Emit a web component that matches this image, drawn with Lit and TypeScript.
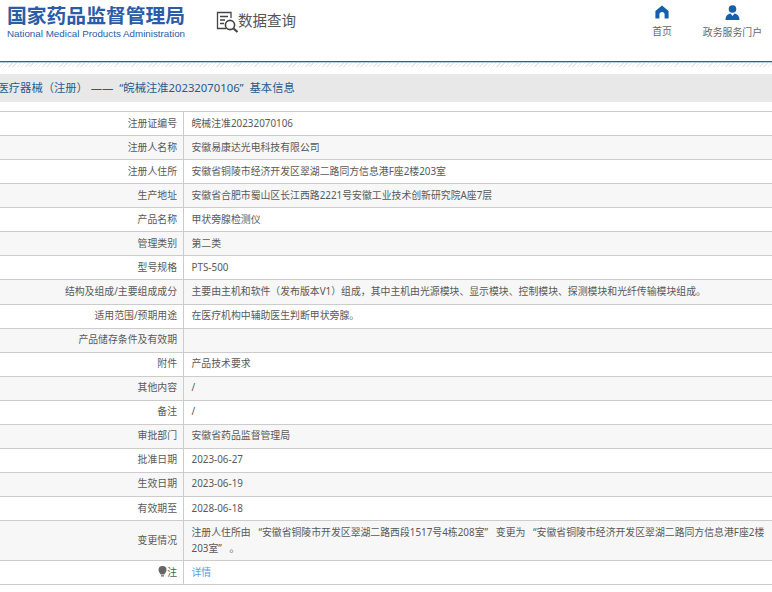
import { LitElement, html, css } from "lit";
import { customElement } from "lit/decorators.js";

const rows: [string, string][] = [
  ["注册证编号", "皖械注准20232070106"],
  ["注册人名称", "安徽易康达光电科技有限公司"],
  ["注册人住所", "安徽省铜陵市经济开发区翠湖二路同方信息港F座2楼203室"],
  ["生产地址", "安徽省合肥市蜀山区长江西路2221号安徽工业技术创新研究院A座7层"],
  ["产品名称", "甲状旁腺检测仪"],
  ["管理类别", "第二类"],
  ["型号规格", "PTS-500"],
  ["结构及组成/主要组成成分", "主要由主机和软件（发布版本V1）组成，其中主机由光源模块、显示模块、控制模块、探测模块和光纤传输模块组成。"],
  ["适用范围/预期用途", "在医疗机构中辅助医生判断甲状旁腺。"],
  ["产品储存条件及有效期", ""],
  ["附件", "产品技术要求"],
  ["其他内容", "/"],
  ["备注", "/"],
  ["审批部门", "安徽省药品监督管理局"],
  ["批准日期", "2023-06-27"],
  ["生效日期", "2023-06-19"],
  ["有效期至", "2028-06-18"],
  ["变更情况", "注册人住所由 \u00a0“安徽省铜陵市开发区翠湖二路西段1517号4栋208室” \u00a0变更为 \u00a0“安徽省铜陵市经济开发区翠湖二路同方信息港F座2楼203室” \u00a0。"],
];

@customElement("app-root")
export class AppRoot extends LitElement {
  static styles = css`
    :host {
      display: block;
      width: 772px;
      height: 592px;
      overflow: hidden;
      background: #fff;
      font-family: "Noto Sans", "Noto Sans CJK SC", sans-serif;
      color: #595959;
      font-size: 9.87px;
    }
    .header {
      height: 61px;
      display: flex;
      box-sizing: border-box;
      padding: 3px 0 0 7px;
    }
    .logo { width: 178px; }
    .logo-cn {
      font-family: "Noto Sans CJK SC", sans-serif;
      font-size: 19.8px;
      font-weight: 700;
      color: #2a5ca8;
      line-height: 24px;
      white-space: nowrap;
    }
    .logo-en {
      font-family: "Liberation Sans", sans-serif;
      font-size: 9.8px;
      color: #2a5ca8;
      line-height: 11px;
      margin-top: 1px;
      white-space: nowrap;
    }
    .query {
      display: flex;
      align-items: flex-start;
      margin-left: 31px;
      padding-top: 7px;
      font-size: 14.5px;
      line-height: 20px;
      color: #555;
      white-space: nowrap;
    }
    .query span { margin-left: -1px; }
    .nav { margin-left: auto; display: flex; padding-right: 10px; padding-top: 2px; }
    .nav-item {
      display: flex;
      flex-direction: column;
      align-items: center;
      color: #666;
      line-height: 14px;
    }
    .nav-item svg { display: block; margin-bottom: 5px; }
    .nav-home { margin-right: 31px; }
    .rule {
      height: 5px;
      border-top: 1px solid #1a6a9a;
      box-shadow: inset 0 1px 0 #b4cfe0;
      background: repeating-linear-gradient(135deg, #e8e8e8 0 1px, #fff 1px 3px);
    }
    .bar {
      margin-top: 7px;
      height: 28px;
      background: #e8e8e8;
      color: #2a5a88;
      font-size: 11.3px;
      line-height: 27px;
      white-space: nowrap;
      overflow: hidden;
    }
    .bar span { display: inline-block; margin-left: -2.5px; }
    .table {
      margin-top: 9px;
      border-top: 1px solid #ccc;
    }
    .row {
      display: grid;
      grid-template-columns: 184px 1fr;
      border-bottom: 1px solid #ccc;
      min-height: 23.07px;
    }
    .row:nth-child(even) { background: #f7f7f7; }
    .label {
      padding: 0 6px 2px 0;
      border-right: 1px solid #ccc;
      display: flex;
      align-items: center;
      justify-content: flex-end;
      line-height: 16px;
    }
    .value {
      padding: 2.5px 0 4.5px 7.5px;
      line-height: 16px;
      display: flex;
      align-items: center;
      word-spacing: 1.3px;
    }
    .value a { color: #5a9be6; text-decoration: none; }
  `;

  render() {
    return html`
      <div class="header">
        <div class="logo">
          <div class="logo-cn">国家药品监督管理局</div>
          <div class="logo-en">National Medical Products Administration</div>
        </div>
        <div class="query">
          <svg width="23" height="24" viewBox="0 0 23 24" fill="none" stroke="#444" stroke-width="1.3">
            <path d="M10 18.5H1.5V2.5H15V8" />
            <path d="M4 6.5h8M4 10h5M4 13.5h4" />
            <circle cx="14" cy="15" r="4.6" stroke-width="1.6" />
            <path d="M17.5 18.5l4 3.5" stroke-width="2.2" />
          </svg>
          <span>数据查询</span>
        </div>
        <div class="nav">
          <div class="nav-item nav-home">
            <svg width="14" height="14" viewBox="0 0 14 14" fill="#1560ac">
              <path d="M7 .5 13.6 6v7.5H9.6V9.5a2.6 2.6 0 0 0-5.2 0v4H.4V6z" />
            </svg>
            <span>首页</span>
          </div>
          <div class="nav-item">
            <svg width="15" height="15" viewBox="0 0 15 15" fill="#1560ac">
              <circle cx="7.5" cy="4" r="3.8" />
              <path d="M.5 15c0-3.5 2-6 5-6.4L7.5 11l2-2.4c3 .4 5 2.9 5 6.4z" />
            </svg>
            <span>政务服务门户</span>
          </div>
        </div>
      </div>
      <div class="rule"></div>
      <div class="bar"><span>医疗器械（注册） —— \u00a0“皖械注准20232070106” \u00a0基本信息</span></div>
      <div class="table">
        ${rows.map(
          ([k, v]) => html`<div class="row"><div class="label">${k}</div><div class="value"><span>${v}</span></div></div>`
        )}
        <div class="row">
          <div class="label">
            <svg width="9" height="11" viewBox="0 0 9 11" fill="#666"><path d="M4.5 0a4 4 0 0 1 4 4c0 2-1.6 3-2.2 4.5H2.7C2.1 7 .5 6 .5 4a4 4 0 0 1 4-4zM3 9.3h3v1.2H3z" /></svg>注
          </div>
          <div class="value"><a>详情</a></div>
        </div>
      </div>
    `;
  }
}
